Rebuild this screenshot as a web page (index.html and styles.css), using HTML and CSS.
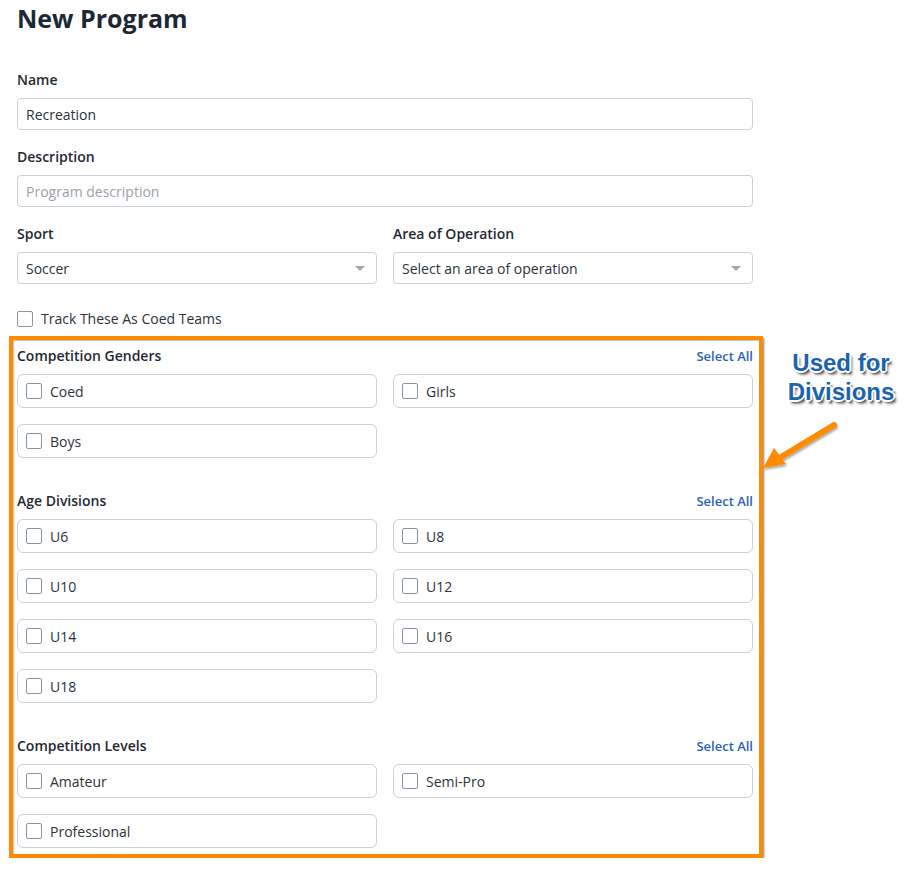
FILE: index.html
```html
<!DOCTYPE html>
<html lang="en">
<head>
    <meta charset="UTF-8">
    <title>New Program</title>
    <link rel="stylesheet" href="styles.css">
</head>
<body>
<div class="page">
    <h1 class="title">New Program</h1>

    <div class="field">
        <label class="label">Name</label>
        <div class="input">Recreation</div>
    </div>
    <div class="field">
        <label class="label">Description</label>
        <div class="input placeholder">Program description</div>
    </div>
    <div class="field two-col">
        <div>
            <label class="label">Sport</label>
            <div class="input select">Soccer</div>
        </div>
        <div>
            <label class="label">Area of Operation</label>
            <div class="input select">Select an area of operation</div>
        </div>
    </div>

    <div class="track"><span class="box"></span>Track These As Coed Teams</div>

    <div class="highlight">
        <div class="group">
            <div class="group-head"><span>Competition Genders</span><a class="select-all">Select All</a></div>
            <div class="options">
                <div class="option"><span class="box"></span>Coed</div>
                <div class="option"><span class="box"></span>Girls</div>
                <div class="option"><span class="box"></span>Boys</div>
            </div>
        </div>
        <div class="group">
            <div class="group-head"><span>Age Divisions</span><a class="select-all">Select All</a></div>
            <div class="options">
                <div class="option"><span class="box"></span>U6</div>
                <div class="option"><span class="box"></span>U8</div>
                <div class="option"><span class="box"></span>U10</div>
                <div class="option"><span class="box"></span>U12</div>
                <div class="option"><span class="box"></span>U14</div>
                <div class="option"><span class="box"></span>U16</div>
                <div class="option"><span class="box"></span>U18</div>
            </div>
        </div>
        <div class="group">
            <div class="group-head"><span>Competition Levels</span><a class="select-all">Select All</a></div>
            <div class="options">
                <div class="option"><span class="box"></span>Amateur</div>
                <div class="option"><span class="box"></span>Semi-Pro</div>
                <div class="option"><span class="box"></span>Professional</div>
            </div>
        </div>
    </div>
</div>

<div class="note">Used for<br>Divisions</div>
<svg class="arrow" width="100" height="70" viewBox="0 0 100 70">
    <defs>
        <filter id="sh" x="-20%" y="-20%" width="150%" height="150%">
            <feDropShadow dx="1" dy="2" stdDeviation="1.2" flood-color="#000" flood-opacity="0.35"/>
        </filter>
    </defs>
    <g filter="url(#sh)">
        <line x1="74" y1="5" x2="16" y2="40" stroke="#ff8c00" stroke-width="6" stroke-linecap="round"/>
        <polygon points="3,48 14,28 26,44" fill="#ff8c00"/>
    </g>
</svg>
</body>
</html>
```
FILE: styles.css
```css
body {
    margin: 0;
    background: #fff;
    font-family: "Open Sans", "Liberation Sans", sans-serif;
    color: #1f2933;
}

.page {
    width: 736px;
    padding-left: 17px;
}

.title {
    margin: 0;
    font-size: 25px;
    line-height: 36px;
    font-weight: 700;
    color: #1c2833;
}

.field {
    margin-bottom: 17px;
}

.title + .field {
    margin-top: 34px;
}

.label {
    display: block;
    font-size: 14px;
    font-weight: 600;
    line-height: 20px;
    margin-bottom: 8px;
}

.input {
    height: 32px;
    box-sizing: border-box;
    border: 1px solid #ccd1d8;
    border-radius: 4px;
    padding: 0 8px;
    font-size: 14px;
    line-height: 31px;
    color: #2b333b;
}

.placeholder {
    color: #9aa1a9;
}

.select {
    position: relative;
}

.select::after {
    content: "";
    position: absolute;
    right: 11px;
    top: 13px;
    border-left: 5px solid transparent;
    border-right: 5px solid transparent;
    border-top: 5px solid #a3a8ae;
}

.two-col {
    display: grid;
    grid-template-columns: 1fr 1fr;
    gap: 16px;
    margin-bottom: 27px;
}

.box {
    width: 16px;
    height: 16px;
    box-sizing: border-box;
    border: 1px solid #8895a2;
    border-radius: 2px;
    background: #fff;
    flex: none;
}

.track {
    display: flex;
    align-items: center;
    gap: 8px;
    font-size: 14px;
    line-height: 16px;
    color: #2b333b;
    margin-bottom: 9px;
}

.highlight {
    margin-left: -8px;
    width: 736px;
    border: 4px solid #ff8c00;
    padding: 6px 6px 6px 4px;
    box-shadow: 1px 2px 2px rgba(0, 0, 0, 0.5), inset 1px 1px 1px rgba(0, 0, 0, 0.25);
}

.group + .group {
    margin-top: 33px;
}

.group-head {
    display: flex;
    justify-content: space-between;
    align-items: center;
    font-size: 14px;
    font-weight: 600;
    line-height: 20px;
    margin-bottom: 8px;
}

.select-all {
    color: #2c5fb3;
    font-size: 13px;
    font-weight: 600;
}

.options {
    display: grid;
    grid-template-columns: 1fr 1fr;
    column-gap: 16px;
    row-gap: 16px;
}

.option {
    height: 34px;
    box-sizing: border-box;
    border: 1px solid #ccd1d8;
    border-radius: 6px;
    padding: 0 8px;
    display: flex;
    align-items: center;
    gap: 8px;
    font-size: 14px;
    color: #2b333b;
}

.note {
    position: absolute;
    left: 782px;
    top: 348px;
    width: 118px;
    text-align: center;
    font-family: "Liberation Sans", Arial, sans-serif;
    font-weight: 700;
    font-size: 24px;
    line-height: 29px;
    color: #1a64ad;
    text-shadow:
        -1px -1px 0 #fff, 1px -1px 0 #fff, -1px 1px 0 #fff, 1px 1px 0 #fff,
        -2px 0 0 #fff, 2px 0 0 #fff, 0 -2px 0 #fff, 0 2px 0 #fff,
        2px 3px 2px rgba(0, 0, 0, 0.6), 3px 4px 3px rgba(0, 0, 0, 0.35);
}

.arrow {
    position: absolute;
    left: 760px;
    top: 420px;
}
```
